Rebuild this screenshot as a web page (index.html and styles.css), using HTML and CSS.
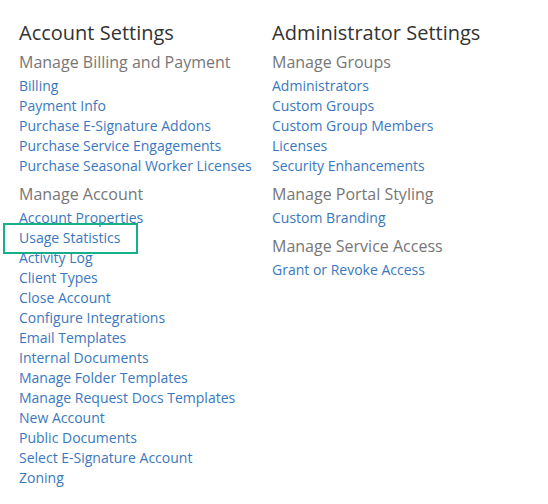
FILE: index.html
```html
<!DOCTYPE html>
<html>
<head>
<meta charset="utf-8">
<link rel="stylesheet" href="styles.css">
</head>
<body>
<div class="page">
  <div class="col">
    <h1 class="title">Account Settings</h1>
    <div class="group">
      <h2 class="sub">Manage Billing and Payment</h2>
      <a class="link">Billing</a>
      <a class="link">Payment Info</a>
      <a class="link">Purchase E-Signature Addons</a>
      <a class="link">Purchase Service Engagements</a>
      <a class="link">Purchase Seasonal Worker Licenses</a>
    </div>
    <div class="group">
      <h2 class="sub">Manage Account</h2>
      <a class="link">Account Properties</a>
      <a class="link highlighted">Usage Statistics</a>
      <a class="link">Activity Log</a>
      <a class="link">Client Types</a>
      <a class="link">Close Account</a>
      <a class="link">Configure Integrations</a>
      <a class="link">Email Templates</a>
      <a class="link">Internal Documents</a>
      <a class="link">Manage Folder Templates</a>
      <a class="link">Manage Request Docs Templates</a>
      <a class="link">New Account</a>
      <a class="link">Public Documents</a>
      <a class="link">Select E-Signature Account</a>
      <a class="link">Zoning</a>
    </div>
  </div>
  <div class="col">
    <h1 class="title">Administrator Settings</h1>
    <div class="group">
      <h2 class="sub">Manage Groups</h2>
      <a class="link">Administrators</a>
      <a class="link">Custom Groups</a>
      <a class="link">Custom Group Members</a>
      <a class="link">Licenses</a>
      <a class="link">Security Enhancements</a>
    </div>
    <div class="group">
      <h2 class="sub">Manage Portal Styling</h2>
      <a class="link">Custom Branding</a>
    </div>
    <div class="group">
      <h2 class="sub">Manage Service Access</h2>
      <a class="link">Grant or Revoke Access</a>
    </div>
  </div>
</div>
</body>
</html>
```
FILE: styles.css
```css
html, body {
  margin: 0;
  padding: 0;
  background: #ffffff;
}
body {
  font-family: "Open Sans", "Liberation Sans", sans-serif;
}
.page {
  display: grid;
  grid-template-columns: 253px auto;
  padding: 18px 0 0 19px;
}
.col {
  display: flex;
  flex-direction: column;
}
.title {
  margin: 0 0 2px 0;
  font-size: 20px;
  font-weight: 400;
  line-height: 30px;
  color: #333333;
}
.group {
  display: flex;
  flex-direction: column;
  margin-bottom: 6px;
}
.sub {
  margin: 0 0 2px 0;
  font-size: 16px;
  font-weight: 400;
  line-height: 24px;
  color: #777777;
}
.link {
  font-size: 14px;
  line-height: 20px;
  color: #3a78c0;
  text-decoration: none;
  position: relative;
  align-self: flex-start;
}
.highlighted::after {
  content: "";
  position: absolute;
  left: -16px;
  right: -18px;
  top: -5px;
  bottom: -6px;
  border: 2px solid #14b089;
}
```
